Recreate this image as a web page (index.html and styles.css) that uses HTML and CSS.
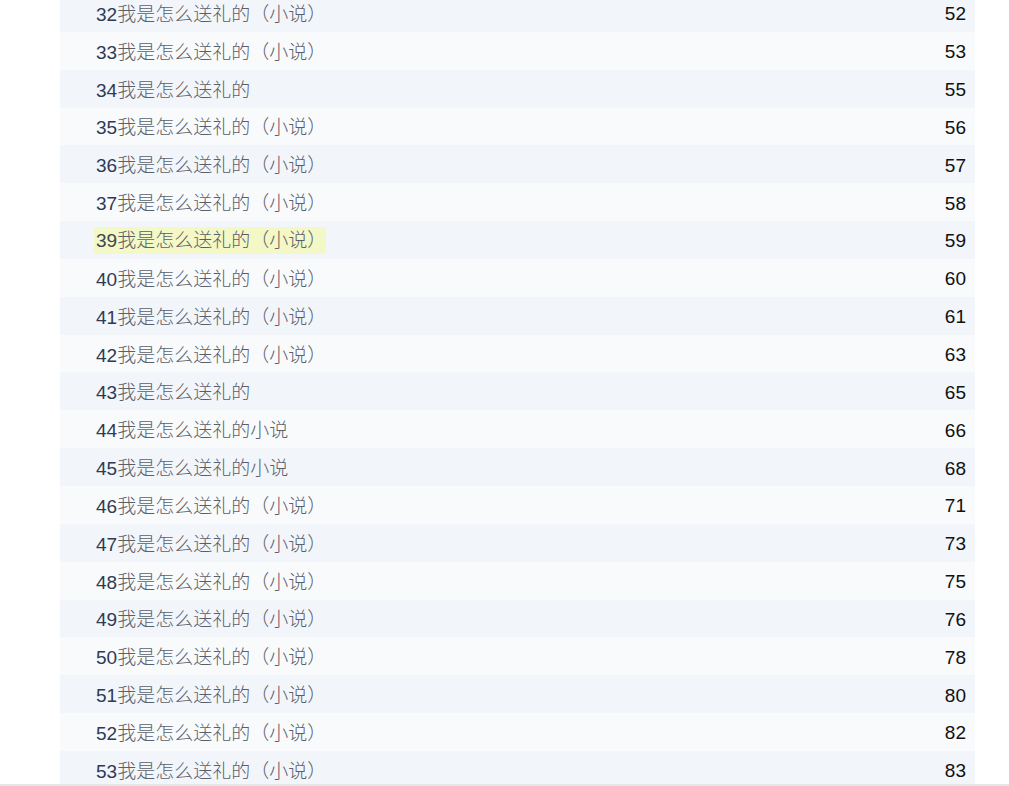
FILE: index.html
```html
<!DOCTYPE html>
<html lang="zh-CN">
<head>
<meta charset="utf-8">
<title>目录</title>
<link rel="stylesheet" href="styles.css">
</head>
<body>
<div class="page">
  <ul class="toc">
    <li class="row dark"><span class="title"><span class="num">32</span>我是怎么送礼的（小说）</span><span class="pg">52</span></li>
    <li class="row light"><span class="title"><span class="num">33</span>我是怎么送礼的（小说）</span><span class="pg">53</span></li>
    <li class="row dark"><span class="title"><span class="num">34</span>我是怎么送礼的</span><span class="pg">55</span></li>
    <li class="row light"><span class="title"><span class="num">35</span>我是怎么送礼的（小说）</span><span class="pg">56</span></li>
    <li class="row dark"><span class="title"><span class="num">36</span>我是怎么送礼的（小说）</span><span class="pg">57</span></li>
    <li class="row light"><span class="title"><span class="num">37</span>我是怎么送礼的（小说）</span><span class="pg">58</span></li>
    <li class="row dark"><span class="title hl"><span class="num">39</span>我是怎么送礼的（小说）</span><span class="pg">59</span></li>
    <li class="row light"><span class="title"><span class="num">40</span>我是怎么送礼的（小说）</span><span class="pg">60</span></li>
    <li class="row dark"><span class="title"><span class="num">41</span>我是怎么送礼的（小说）</span><span class="pg">61</span></li>
    <li class="row light"><span class="title"><span class="num">42</span>我是怎么送礼的（小说）</span><span class="pg">63</span></li>
    <li class="row dark"><span class="title"><span class="num">43</span>我是怎么送礼的</span><span class="pg">65</span></li>
    <li class="row light"><span class="title"><span class="num">44</span>我是怎么送礼的小说</span><span class="pg">66</span></li>
    <li class="row dark"><span class="title"><span class="num">45</span>我是怎么送礼的小说</span><span class="pg">68</span></li>
    <li class="row light"><span class="title"><span class="num">46</span>我是怎么送礼的（小说）</span><span class="pg">71</span></li>
    <li class="row dark"><span class="title"><span class="num">47</span>我是怎么送礼的（小说）</span><span class="pg">73</span></li>
    <li class="row light"><span class="title"><span class="num">48</span>我是怎么送礼的（小说）</span><span class="pg">75</span></li>
    <li class="row dark"><span class="title"><span class="num">49</span>我是怎么送礼的（小说）</span><span class="pg">76</span></li>
    <li class="row light"><span class="title"><span class="num">50</span>我是怎么送礼的（小说）</span><span class="pg">78</span></li>
    <li class="row dark"><span class="title"><span class="num">51</span>我是怎么送礼的（小说）</span><span class="pg">80</span></li>
    <li class="row light"><span class="title"><span class="num">52</span>我是怎么送礼的（小说）</span><span class="pg">82</span></li>
    <li class="row dark"><span class="title"><span class="num">53</span>我是怎么送礼的（小说）</span><span class="pg">83</span></li>
  </ul>
</div>
<div class="bottom-edge"></div>
</body>
</html>
```

FILE: styles.css
```css
html, body {
  margin: 0;
  padding: 0;
  background: #ffffff;
  overflow: hidden;
}

.page {
  padding-left: 60px;
  width: 915px;
}

.toc {
  list-style: none;
  margin: -6px 0 0 0;
  padding: 0;
}

.row {
  display: flex;
  align-items: center;
  justify-content: space-between;
  box-sizing: border-box;
  height: 37.85px;
  padding: 3px 9px 0 36px;
  font-family: "Liberation Sans", "Noto Sans CJK SC", sans-serif;
  font-size: 19px;
}

.row.dark {
  background: #f2f5fa;
}

.row.light {
  background: #f8fafc;
}

.title {
  color: #5a5f6a;
  font-weight: 300;
  line-height: 25px;
}

.num {
  color: #2f3a55;
  font-weight: 400;
}

.title.hl {
  background: #f4f7c6;
  margin-left: -2px;
  padding-left: 2px;
  margin-top: -2px;
  padding-top: 1px;
  padding-bottom: 1px;
}

.title.hl .num {
  color: #3c4650;
}

.pg {
  color: #111111;
}

.bottom-edge {
  position: fixed;
  left: 0;
  right: 0;
  bottom: 0;
  height: 2px;
  background: #e6e6e6;
}
```
